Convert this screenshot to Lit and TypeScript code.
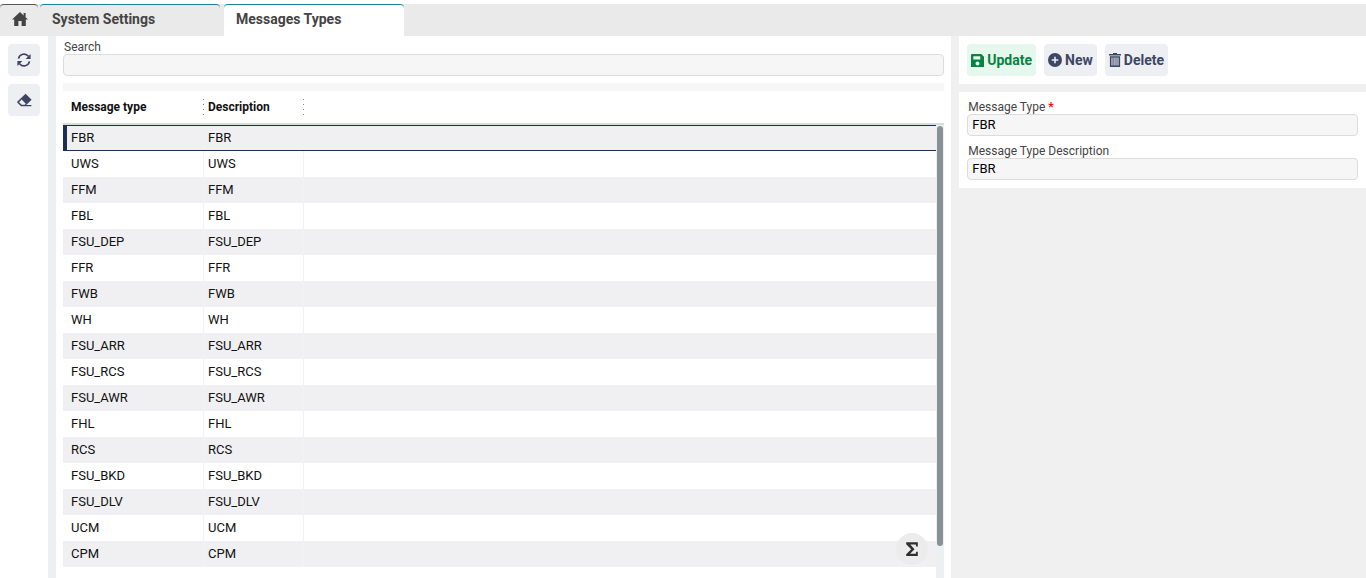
import { LitElement, html, css, svg } from "lit";
import { customElement, property, state } from "lit/decorators.js";
import { classMap } from "lit/directives/class-map.js";

const TYPES = [
  "FBR", "UWS", "FFM", "FBL", "FSU_DEP", "FFR", "FWB", "WH", "FSU_ARR",
  "FSU_RCS", "FSU_AWR", "FHL", "RCS", "FSU_BKD", "FSU_DLV", "UCM", "CPM",
];

interface Icon { width: number; height: number; box: string; shape: unknown }

const icons: Record<string, Icon> = {
  home: {
    width: 16, height: 14, box: "0 .6 16 13.8",
    shape: svg`<path d="M8 .6 0 8h2.2v6.4h4.2V9.6h3.2v4.8h4.2V8H16l-2.4-2.2V1.6h-2v2.3z"/>`,
  },
  refresh: {
    width: 14, height: 14, box: "1 1 14 14",
    shape: svg`<path d="M2.5 6.6a5.6 5.6 0 0 1 9.9-2.3M13.5 9.4a5.6 5.6 0 0 1-9.9 2.3" fill="none" stroke="currentColor" stroke-width="1.7"/><path d="M14.6 2v5H9.6zM1.4 14V9h5z"/>`,
  },
  eraser: {
    width: 15, height: 14, box: "0.6 1 15 13.4",
    shape: svg`<path fill-rule="evenodd" d="M9.2 1.4 15.2 7.4 9.8 12.8H15V14H4.6L.8 10.2 1 9.2zM5.2 7.3 2.7 9.9l2.6 2.6h3L9.4 11.4z"/>`,
  },
  save: {
    width: 13, height: 13, box: "1.5 1.5 13 13",
    shape: svg`<path fill-rule="evenodd" d="M2.5 1.5h9.3l2.7 2.7v10.3h-13v-12a1 1 0 0 1 1-1zM3.8 3.8v3.3h7V3.8zM8 9a2 2 0 1 0 0 4 2 2 0 0 0 0-4z"/>`,
  },
  plus: {
    width: 14, height: 14, box: ".8 .8 14.4 14.4",
    shape: svg`<path fill-rule="evenodd" d="M8 .8a7.2 7.2 0 1 0 0 14.4A7.2 7.2 0 0 0 8 .8zM7.2 4.6h1.6v2.6h2.6v1.6H8.8v2.6H7.2V8.8H4.6V7.2h2.6z"/>`,
  },
  trash: {
    width: 12, height: 14, box: "0 0 12 14",
    shape: svg`<path fill-rule="evenodd" d="M4 0h4v1h4v1.4H0V1h4zM.9 3.2h10.2V14H.9zM2.5 4.6v7.8h1V4.6zM4.6 4.6v7.8h1V4.6zM6.5 4.6v7.8h1V4.6zM8.5 4.6v7.8h1V4.6z"/>`,
  },
  sigma: {
    width: 14, height: 14, box: "1.5 .5 13 14.5",
    shape: svg`<path d="M2 .8h12v4.4h-1.7l-.4-2.1H6.2L10.6 8l-4.6 4.7h5.9l.4-2.1H14V15H2v-1.9L7.2 8 2 2.8z"/>`,
  },
};

@customElement("ui-icon")
export class UiIcon extends LitElement {
  @property() name = "home";

  static styles = css`
    :host { display: inline-flex; flex: none; }
    svg { display: block; fill: currentColor; }
  `;

  render() {
    const icon = icons[this.name];
    return html`<svg width=${icon.width} height=${icon.height} viewBox=${icon.box} aria-hidden="true">${icon.shape}</svg>`;
  }
}

@customElement("app-root")
export class AppRoot extends LitElement {
  @state() private selected = 0;

  static styles = css`
    :host {
      display: flex;
      flex-direction: column;
      height: 100vh;
      overflow: hidden;
      background: #fff;
      color: #111;
      font-family: Roboto, "Liberation Sans", sans-serif;
      font-size: 13px;
    }
    * { box-sizing: border-box; }

    .tabs {
      flex: none;
      display: flex;
      height: 32px;
      margin-top: 4px;
      background: #eaeaea;
    }
    .tab {
      width: 180px;
      margin-right: 4px;
      padding: 0 12px;
      border-top: 1px solid #1d7ea6;
      border-radius: 4px 4px 0 0;
      color: #444;
      font-size: 14px;
      font-weight: 700;
      line-height: 28px;
      text-decoration: none;
    }
    .tab.home {
      display: flex;
      width: 38px;
      margin-right: 2px;
      padding: 7px 0 0 12px;
      border-color: #555;
    }
    .tab.active { background: #fff; }

    .body { flex: 1; min-height: 0; display: flex; }
    .rail {
      flex: none;
      display: flex;
      flex-direction: column;
      gap: 8px;
      padding: 8px;
      border-right: 8px solid #ecf0f1;
    }
    button {
      display: inline-flex;
      align-items: center;
      justify-content: center;
      height: 32px;
      padding: 0;
      border: 0;
      border-radius: 4px;
      background: #eeeff3;
      color: #3d4663;
      font: 700 14px/16px Roboto, "Liberation Sans", sans-serif;
      cursor: pointer;
    }
    .rail button { width: 32px; }

    .list {
      position: relative;
      flex: 13;
      min-width: 0;
      display: flex;
      flex-direction: column;
      padding: 4px 7px 0;
    }
    label {
      display: block;
      padding-left: 1px;
      color: #444;
      font-size: 12px;
      line-height: 14px;
    }
    input {
      display: block;
      width: 100%;
      height: 22px;
      padding: 0 4px 1px;
      border: 1px solid #dcdcdc;
      border-radius: 4px;
      background: #f6f6f6;
      color: #000;
      font: 13px/18px Roboto, "Liberation Sans", sans-serif;
    }
    .strip { flex: none; height: 8px; margin-top: 7px; background: #f7f7f7; }

    .grid { flex: 1; min-height: 0; overflow: hidden; display: flex; }
    table {
      flex: 1;
      align-self: flex-start;
      border-collapse: separate;
      border-spacing: 0;
      table-layout: fixed;
    }
    .c1 { width: 141px; }
    .c2 { width: 100px; }
    th {
      height: 34px;
      padding: 0 4px;
      border-bottom: 2px solid #d9dcdc;
      font-size: 12px;
      font-weight: 700;
      text-align: left;
    }
    th:first-child, td:first-child { padding-left: 8px; }
    .head {
      display: flex;
      align-items: center;
      justify-content: space-between;
      height: 16px;
      margin-right: -4px;
    }
    .grip {
      width: 1px;
      height: 16px;
      background: repeating-linear-gradient(#888 0 1px, transparent 1px 5px);
    }
    td {
      height: 26px;
      padding: 0 4px;
      border-right: 1px solid #f2f2f3;
      line-height: 16px;
    }
    td:last-child { border-right: 0; }
    tbody tr:nth-child(odd) td { background: #f0f0f3; }
    tbody tr.selected td {
      border-right: 0;
      border-top: 1px solid #1b2f52;
      border-bottom: 1px solid #1b2f52;
    }
    tbody tr.selected td:first-child { border-left: 4px solid #1b2f52; padding-left: 4px; }

    .track {
      flex: none;
      width: 8px;
      padding: 35px 1px 0;
      background: linear-gradient(#fff 0 32px, #d9dcdc 32px 34px, #ecf0f1 34px);
    }
    .thumb { height: 93%; border-radius: 3px; background: #869198; }

    .sum {
      position: absolute;
      right: 23px;
      bottom: 13px;
      width: 32px;
      border-radius: 50%;
      background: #ececec;
      color: #2f2f2f;
    }

    .side {
      flex: 6;
      min-width: 0;
      border-left: 8px solid #f0f0f0;
      background: #f0f0f0;
    }
    .actions { display: flex; gap: 8px; padding: 8px; background: #fff; }
    .actions button { gap: 3px; padding: 0 4px; }
    .actions button.update { background: #e6f7ed; color: #068242; }
    .form {
      display: flex;
      flex-direction: column;
      gap: 8px;
      margin-top: 8px;
      padding: 8px;
      background: #fff;
    }
    .req { color: #f00; font-weight: 700; }
  `;

  render() {
    const current = TYPES[this.selected];
    return html`
      <nav class="tabs">
        <a class="tab home" href="#home" aria-label="Home"><ui-icon name="home"></ui-icon></a>
        <a class="tab" href="#settings">System Settings</a>
        <a class="tab active" href="#messages">Messages Types</a>
      </nav>
      <div class="body">
        <aside class="rail">
          <button aria-label="Refresh"><ui-icon name="refresh"></ui-icon></button>
          <button aria-label="Clear"><ui-icon name="eraser"></ui-icon></button>
        </aside>
        <main class="list">
          <label for="search">Search</label>
          <input id="search" type="text" />
          <div class="strip"></div>
          <div class="grid">
            <table>
              <colgroup><col class="c1" /><col class="c2" /><col /></colgroup>
              <thead>
                <tr>
                  <th><div class="head">Message type<span class="grip"></span></div></th>
                  <th><div class="head">Description<span class="grip"></span></div></th>
                  <th></th>
                </tr>
              </thead>
              <tbody>
                ${TYPES.map((t, i) => html`
                  <tr class=${classMap({ selected: i === this.selected })} @click=${() => (this.selected = i)}>
                    <td>${t}</td><td>${t}</td><td></td>
                  </tr>`)}
              </tbody>
            </table>
            <div class="track"><div class="thumb"></div></div>
          </div>
          <button class="sum" aria-label="Totals"><ui-icon name="sigma"></ui-icon></button>
        </main>
        <section class="side">
          <div class="actions">
            <button class="update"><ui-icon name="save"></ui-icon>Update</button>
            <button><ui-icon name="plus"></ui-icon>New</button>
            <button><ui-icon name="trash"></ui-icon>Delete</button>
          </div>
          <form class="form">
            <div>
              <label for="type">Message Type <span class="req">*</span></label>
              <input id="type" type="text" required .value=${current} />
            </div>
            <div>
              <label for="desc">Message Type Description</label>
              <input id="desc" type="text" .value=${current} />
            </div>
          </form>
        </section>
      </div>
    `;
  }
}
